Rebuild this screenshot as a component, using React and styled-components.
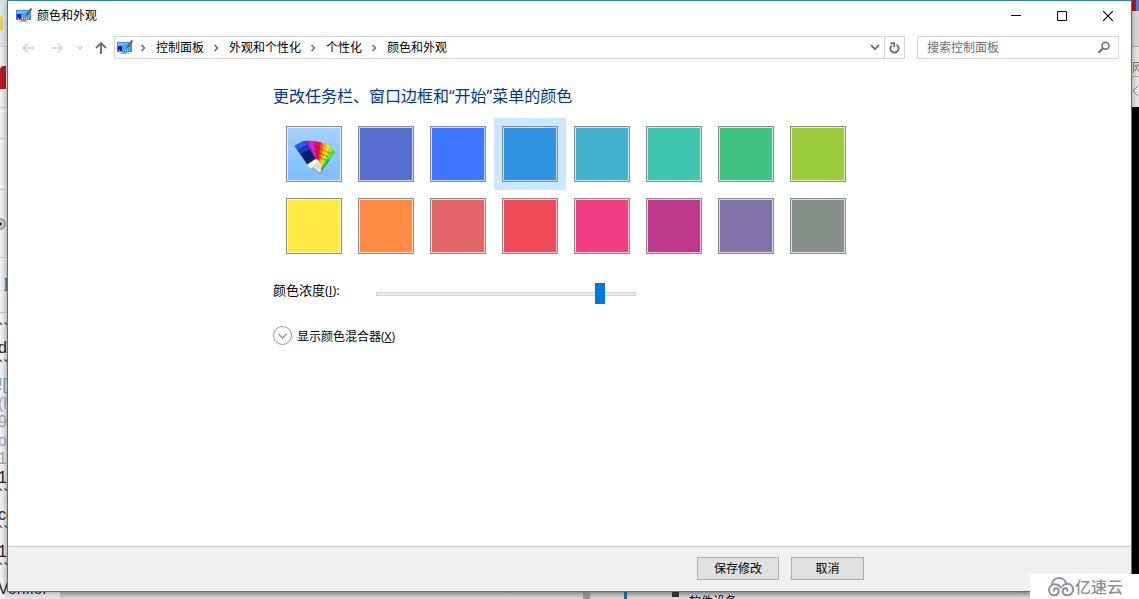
import { useState } from "react";
import styled, { createGlobalStyle } from "styled-components";

const GlobalStyle = createGlobalStyle`
  * {
    box-sizing: border-box;
  }
  body {
    margin: 0;
    overflow: hidden;
    font-family: "Open Sans", "Noto Sans CJK SC", sans-serif;
    font-size: 12px;
    color: #000;
  }
  button, input {
    font: inherit;
    color: inherit;
    margin: 0;
  }
`;

// Desktop and the windows that peek out from behind

const Desktop = styled.div`
  position: relative;
  display: flex;
  min-height: 100vh;
  padding: 0 7px 7px;
  background: #e3e3e3;
  overflow: hidden;
`;

const Backdrop = styled.div`
  position: absolute;
  inset: 0;
  display: flex;
  justify-content: space-between;
`;

const Editor = styled.div`
  display: flex;
  flex-direction: column;
  width: 60px;
  background: linear-gradient(90deg, #f1f2f5, #e3e3e5 8px);
`;

const EditorBand = styled.div`
  display: flex;
  align-items: center;
  flex: none;
  height: ${(props) => props.height}px;
  background: ${(props) => props.fill || "transparent"};
  border-bottom: 1px solid #c5c8cd;
`;

const Mark = styled.span`
  width: ${(props) => props.width}px;
  height: ${(props) => props.height}px;
  background: ${(props) => props.color};
  border-radius: ${(props) => props.radius || "0"};
`;

const RadioMark = styled.span`
  width: 12px;
  height: 12px;
  margin-left: -6px;
  border: 2px solid #a5a5a5;
  border-radius: 50%;
  background: #444;
  box-shadow: inset 0 0 0 2px #ddd;
`;

const SerifMark = styled.span`
  margin-left: 3px;
  font-family: "Liberation Serif", serif;
  font-size: 18px;
  color: #4b7494;
`;

const EditorLines = styled.div`
  flex: 1;
  display: grid;
  grid-auto-rows: 1fr;
  padding: 8px 0 1px;
  margin-left: -2px;
  font-family: "Liberation Sans", sans-serif;
  font-size: 16px;
  line-height: 18px;
`;

const EditorLine = styled.span`
  color: ${(props) => props.color || "#222"};
  white-space: nowrap;
`;

const RightPane = styled.div`
  display: flex;
  flex-direction: column;
  width: 7px;
  background: #e6e6e6;
`;

const PaneBand = styled.div`
  display: flex;
  align-items: flex-end;
  flex: ${(props) => (props.height ? "none" : 1)};
  height: ${(props) => props.height}px;
  background: ${(props) => props.fill};
  color: #777;
  border-bottom: ${(props) => (props.line ? "1px solid #aaa" : "none")};
  overflow: hidden;
`;

const Taskline = styled.div`
  position: absolute;
  left: 0;
  right: 0;
  bottom: 0;
  display: flex;
  height: 7px;
  padding-left: 60px;
  overflow: hidden;
`;

const TaskBlank = styled.span`
  width: 523px;
  background: linear-gradient(180deg, #aaa, #e0e0e0);
`;

const TaskScroll = styled.span`
  width: 7px;
  background: #969696;
`;

const TaskGap = styled.span`
  width: 34px;
  background: linear-gradient(180deg, #aaa, #dcdcdc);
`;

const TaskWindow = styled.span`
  flex: 1;
  display: flex;
  gap: 10px;
  padding-left: 45px;
  border-left: 3px solid #2a6a8f;
  background: linear-gradient(180deg, #aaa, #e0e0e0);
  font-size: 12px;
  line-height: 20px;
`;

// The settings window

const Window = styled.main`
  position: relative;
  flex: 1;
  display: flex;
  flex-direction: column;
  min-width: 0;
  background: #fff;
  border: 1px solid #2d7cad;
  box-shadow: 0 0 6px rgba(0, 0, 0, 0.35);
`;

const TitleBar = styled.header`
  display: flex;
  align-items: center;
  height: 29px;
  padding-left: 8px;
`;

const WindowTitle = styled.h1`
  flex: 1;
  margin: 0 0 0 4px;
  font-size: 12px;
  font-weight: 400;
  line-height: 16px;
`;

const CaptionButton = styled.button`
  display: flex;
  align-items: center;
  justify-content: center;
  width: 46px;
  height: 29px;
  padding: 0;
  border: 0;
  background: none;
  &:hover {
    background: ${(props) => (props.$danger ? "#e81123" : "#e5e5e5")};
  }
`;

const NavBar = styled.div`
  display: flex;
  align-items: center;
  padding: 6px 12px 0 5px;
`;

const NavButton = styled.button`
  display: flex;
  align-items: center;
  justify-content: center;
  width: ${(props) => props.$width}px;
  height: 23px;
  padding: 0;
  border: 0;
  background: none;
`;

const AddressBar = styled.nav`
  flex: 1;
  display: flex;
  align-items: center;
  height: 23px;
  padding-left: 2px;
  border: 1px solid #d5d5d5;
`;

const Crumbs = styled.ol`
  flex: 1;
  display: flex;
  margin: 0 0 0 -3px;
  padding: 0;
  list-style: none;
`;

const Crumb = styled.li`
  display: flex;
  align-items: center;
  line-height: 16px;
`;

const CrumbLink = styled.a`
  color: #000;
  text-decoration: none;
  white-space: nowrap;
`;

const CrumbArrow = styled.svg`
  width: 25px;
  height: 16px;
`;

const RefreshButton = styled(NavButton)`
  height: 21px;
  border-left: 1px solid #d5d5d5;
`;

const SearchBox = styled.label`
  display: flex;
  align-items: center;
  width: 202px;
  height: 23px;
  margin-left: 12px;
  padding: 0 7px 0 9px;
  border: 1px solid #d5d5d5;
`;

const SearchInput = styled.input`
  flex: 1;
  min-width: 0;
  height: 20px;
  padding: 0;
  border: 0;
  outline: 0;
  background: none;
  &::placeholder {
    color: #6d6d6d;
    opacity: 1;
  }
`;

const Content = styled.section`
  flex: 1;
  width: 593px;
  max-width: 100%;
  margin: 0 auto;
  padding-top: 25px;
`;

const Heading = styled.h2`
  margin: 0;
  font-size: 16px;
  font-weight: 400;
  line-height: 24px;
  color: #003399;
`;

const SwatchGrid = styled.div`
  display: grid;
  grid-template-columns: repeat(8, 72px);
  margin: 10px 0 0 5px;
`;

const SwatchCell = styled.button`
  display: flex;
  padding: 8px;
  border: 0;
  background: ${(props) => (props.$selected ? "#cce8ff" : "none")};
`;

const Swatch = styled.span`
  display: block;
  width: 56px;
  height: 56px;
  border: 1px solid #8a8d8d;
  box-shadow: inset 0 0 0 1px rgba(255, 255, 255, 0.7);
  background: ${(props) => props.color};
`;

const IntensityRow = styled.div`
  display: flex;
  margin-top: 21px;
`;

const IntensityLabel = styled.label`
  width: 103px;
  font-size: 13px;
  line-height: 14px;
`;

const Slider = styled.input`
  appearance: none;
  width: 260px;
  height: 21px;
  background: none;
  &::-webkit-slider-runnable-track {
    height: 4px;
    border: 1px solid #d6d6d6;
    background: #e7eaea;
  }
  &::-webkit-slider-thumb {
    appearance: none;
    width: 10px;
    height: 21px;
    margin-top: -10px;
    background: #0078d7;
  }
`;

const MixerButton = styled.button`
  display: flex;
  align-items: center;
  gap: 5px;
  height: 19px;
  margin-top: 22px;
  padding: 0;
  border: 0;
  background: none;
`;

const Footer = styled.footer`
  height: 45px;
  padding-top: 10px;
  border-top: 1px solid #cdcdcd;
  background: #f0f0f0;
`;

const FooterInner = styled.div`
  display: flex;
  justify-content: flex-end;
  gap: 12px;
  width: 593px;
  max-width: 100%;
  margin: 0 auto;
  padding-right: 2px;
`;

const PushButton = styled.button`
  width: ${(props) => props.$width}px;
  height: 23px;
  padding: 0;
  border: 1px solid #adadad;
  background: #e1e1e1;
  line-height: 16px;
`;

const Watermark = styled.div`
  position: absolute;
  right: 0;
  bottom: 0;
  display: flex;
  align-items: center;
  gap: 1px;
  width: 109px;
  height: 25px;
  padding-left: 18px;
  background: #fff;
  color: #8c929c;
  font-size: 16px;
  font-weight: 500;
  line-height: 24px;
`;

const colors = [
  ["自动", "linear-gradient(180deg, #a6d2fc, #7dbdfb)"],
  ["蓝紫色", "#566dcd"],
  ["蓝色", "#4075ff"],
  ["天蓝色", "#3192e1"],
  ["青蓝色", "#42b0ce"],
  ["青绿色", "#40c6af"],
  ["绿色", "#40c381"],
  ["黄绿色", "#9ccc3d"],
  ["黄色", "#fee842"],
  ["橙色", "#fc8b46"],
  ["浅红色", "#e3666b"],
  ["红色", "#ef4b5a"],
  ["粉色", "#f13f84"],
  ["紫红色", "#bc398c"],
  ["淡紫色", "#7f73a7"],
  ["灰色", "#869289"],
];

const crumbs = ["控制面板", "外观和个性化", "个性化", "颜色和外观"];

const editorLines = [
  ["```"],
  ["d"],
  ["```"],
  ["![", "#7f9a94"],
  ["(h", "#a3a7ad"],
  ["9", "#a3a7ad"],
  ["o", "#a3a7ad"],
  ["1", "#a3a7ad"],
  ["1"],
  ["```"],
  ["cc"],
  ["```"],
  ["1"],
  ["```"],
  ["Verifier"],
];

function DisplayIcon() {
  return (
    <svg width="17" height="16" viewBox="0 0 17 16" aria-hidden="true">
      <path d="M0 2h15v10H0z" fill="#4f86c0" />
      <path d="M1 3h13v8H1z" fill="#38a9f5" />
      <path d="M1 6c4-1 7-1 13-3H1z" fill="#6cc6fa" />
      <path d="M1 6h4v4H1z" fill="#3010d8" />
      <path d="M1 9h4v2H1z" fill="#2a20c8" />
      <path d="M5 10h9v1H5z" fill="#2f6fdc" />
      <path d="M2 10.500h1M6 10.500h1M8 10.500h1M10 10.500h1M12 10.500h1" stroke="#fff" />
      <path d="M5 12h5v1H5z" fill="#8b9aa5" />
      <path d="M3 13h9v1H3z" fill="#9fb4c4" />
      <path d="M15.500 .5L11 6" stroke="#4f6870" strokeWidth="2" />
      <path d="M11.500 5L9 8.500l3.200-2z" fill="#384c55" />
    </svg>
  );
}

function FanIcon() {
  return (
    <svg width="54" height="54" viewBox="51 51 162 162" aria-hidden="true">
      <path d="M188 120l7 8-39 54-8-12z" fill="#19b43c" />
      <path d="M190 124l4 6-16 20-5-5z" fill="#42ee5d" />
      <path d="M180 109l10 9-35 58-10-12z" fill="#9be31d" />
      <path d="M170 103l11 6-28 62-8-6z" fill="#f2e21c" />
      <path d="M161 99l10 6-20 62-8-6z" fill="#ffb319" />
      <path d="M152 97l10 4-14 62-9-4z" fill="#f8641c" />
      <path d="M140 94l13 3-8 62-10-6z" fill="#e8182d" />
      <path d="M128 92l13 3 1 60-10-4z" fill="#dc1173" />
      <path d="M115 91l14 3 10 58-10 0z" fill="#e420c8" />
      <path d="M101 93l14-1 22 56-12 6z" fill="#7622c6" />
      <path d="M74 107l27-14 37 55-26 16z" fill="#0a1f74" />
      <path d="M74 107l27-14 9 13-27 15z" fill="#285ff2" />
      <path d="M83 121l27-15 8 12-27 15z" fill="#1440bd" />
      <path
        d="M83 121l27-15M91 133l27-15M98 143l27-15M105 153l27-15M133 108l48 22M135 123l39 18M138 137l30 14"
        stroke="#101c59"
        strokeWidth="2"
        opacity=".6"
      />
      <path d="M111 164l25-17 10 4-3 14-10 3-5 6-9-1z" fill="#fff" />
      <path d="M133 164l13-13 10 18-3 17-5 4-8-5-13-13z" fill="#deded9" />
      <path d="M157 168l-2 17-6 4-9-5-12-12" fill="none" stroke="#4c5a66" strokeWidth="2" />
      <circle cx="148" cy="182" r="3" fill="#fff" />
    </svg>
  );
}

function CloudLogo() {
  return (
    <svg
      width="26"
      height="20"
      viewBox="0 0 78 60"
      fill="none"
      stroke="#8c929c"
      strokeWidth="6"
      strokeLinecap="round"
      aria-hidden="true"
    >
      <path d="M12 24C12-1 47-4 54 18" />
      <path d="M18 41c-1-4 2-7 6-7 5 0 8 4 8 9 0 7-5 12-13 12-9 0-16-7-16-16 0-10 8-17 18-17 8 0 13 3 17 9" />
      <path d="M58 41c1-4-2-7-6-7-5 0-8 4-8 9 0 7 6 12 14 12 9 0 17-7 17-17 0-11-8-18-17-18-6 0-11 2-15 7" />
    </svg>
  );
}

function Background() {
  return (
    <Backdrop aria-hidden="true">
      <Editor>
        <EditorBand height={47} fill="#dfe3ec">
          <Mark width={3} height={15} color="#e6cf6d" radius="0 3px 0 0" />
        </EditorBand>
        <EditorBand height={61}>
          <Mark width={6} height={23} color="#b01c22" radius="4px 0 0 0" />
        </EditorBand>
        <EditorBand height={31} />
        <EditorBand height={51} />
        <EditorBand height={68}>
          <RadioMark />
        </EditorBand>
        <EditorBand height={55}>
          <SerifMark>I</SerifMark>
        </EditorBand>
        <EditorLines>
          {editorLines.map(([text, color], i) => (
            <EditorLine key={i} color={color}>
              {text}
            </EditorLine>
          ))}
        </EditorLines>
      </Editor>
      <RightPane>
        <PaneBand height={11} fill="linear-gradient(90deg, #c3101c 4px, #4a7fd0 4px)" />
        <PaneBand height={36} fill="#d9d9d9" line />
        <PaneBand height={30} fill="#e8e6e2" line>
          网
        </PaneBand>
        <PaneBand height={30} fill="#e6e6e6">
          <svg width="7" height="24" viewBox="0 0 7 24" fill="none" stroke="#888">
            <path d="M6 3L1 8l5 5" />
          </svg>
        </PaneBand>
        <PaneBand fill="#000" />
      </RightPane>
      <Taskline>
        <TaskBlank />
        <TaskScroll />
        <TaskGap />
        <TaskWindow>
          <Mark width={7} height={5} color="#333" />
          软件设备
        </TaskWindow>
      </Taskline>
    </Backdrop>
  );
}

function Caption() {
  return (
    <TitleBar>
      <DisplayIcon />
      <WindowTitle>颜色和外观</WindowTitle>
      <CaptionButton aria-label="最小化">
        <svg width="10" height="10" viewBox="0 0 10 10">
          <path d="M0 4.500h10" stroke="#000" />
        </svg>
      </CaptionButton>
      <CaptionButton aria-label="最大化">
        <svg width="10" height="10" viewBox="0 0 10 10">
          <path d="M.5.5h9v9h-9z" fill="none" stroke="#000" />
        </svg>
      </CaptionButton>
      <CaptionButton aria-label="关闭" $danger>
        <svg width="10" height="10" viewBox="0 0 10 10">
          <path d="M0 0l10 10M10 0L0 10" stroke="#000" strokeWidth="1.200" />
        </svg>
      </CaptionButton>
    </TitleBar>
  );
}

function Navigation() {
  return (
    <NavBar>
      <NavButton $width={29} aria-label="后退">
        <svg width="14" height="12" viewBox="0 0 14 12" fill="none" stroke="#d0d0d0" strokeWidth="1.500">
          <path d="M13 6H2M6.500 1.500L2 6l4.500 4.500" />
        </svg>
      </NavButton>
      <NavButton $width={29} aria-label="前进">
        <svg width="14" height="12" viewBox="0 0 14 12" fill="none" stroke="#d0d0d0" strokeWidth="1.500">
          <path d="M1 6h11M7.500 1.500L12 6l-4.500 4.500" />
        </svg>
      </NavButton>
      <NavButton $width={17} aria-label="最近浏览的位置">
        <svg width="8" height="6" viewBox="0 0 8 6" fill="none" stroke="#d0d0d0" strokeWidth="1.500">
          <path d="M1.500 1.500L4 4l2.500-2.500" />
        </svg>
      </NavButton>
      <NavButton $width={26} aria-label="上移">
        <svg width="12" height="14" viewBox="0 0 12 14" fill="none" stroke="#6c6c6c" strokeWidth="1.900">
          <path d="M6 13V2M1 7l5-5 5 5" />
        </svg>
      </NavButton>
      <AddressBar aria-label="地址">
        <DisplayIcon />
        <Crumbs>
          {crumbs.map((name) => (
            <Crumb key={name}>
              <CrumbArrow viewBox="0 0 25 16" fill="none" stroke="#6c6c6c" strokeWidth="1.500">
                <path d="M10.500 5L13.500 8l-3 3" />
              </CrumbArrow>
              <CrumbLink href="#">{name}</CrumbLink>
            </Crumb>
          ))}
        </Crumbs>
        <NavButton $width={18} aria-label="以前的位置">
          <svg width="10" height="7" viewBox="0 0 10 7" fill="none" stroke="#6c6c6c" strokeWidth="1.900">
            <path d="M1 1.200l4 4 4-4" />
          </svg>
        </NavButton>
        <RefreshButton $width={20} aria-label="刷新">
          <svg width="11" height="12" viewBox="0 0 11 12" fill="none" stroke="#6c6c6c" strokeWidth="1.800">
            <path d="M7.600 2.700a4.200 4.200 0 1 1-5 .6" />
            <path d="M1.300 1.200h3.900v3.800" />
          </svg>
        </RefreshButton>
      </AddressBar>
      <SearchBox>
        <SearchInput type="text" aria-label="搜索控制面板" placeholder="搜索控制面板" />
        <svg width="14" height="13" viewBox="0 0 14 13" fill="none" stroke="#6c6c6c">
          <circle cx="8.500" cy="4.800" r="3.500" strokeWidth="1.500" />
          <path d="M6 7.300L1.500 11.800" strokeWidth="2" />
        </svg>
      </SearchBox>
    </NavBar>
  );
}

export default function App() {
  const [selected, setSelected] = useState(3);
  const [intensity, setIntensity] = useState(224);

  return (
    <>
      <GlobalStyle />
      <Desktop>
        <Background />
        <Window>
          <Caption />
          <Navigation />
          <Content>
            <Heading>更改任务栏、窗口边框和“开始”菜单的颜色</Heading>
            <SwatchGrid>
              {colors.map(([name, color], i) => (
                <SwatchCell
                  key={name}
                  aria-label={name}
                  aria-pressed={selected === i}
                  $selected={selected === i}
                  onClick={() => setSelected(i)}
                >
                  <Swatch color={color}>{i === 0 && <FanIcon />}</Swatch>
                </SwatchCell>
              ))}
            </SwatchGrid>
            <IntensityRow>
              <IntensityLabel htmlFor="intensity">
                颜色浓度(<u>I</u>):
              </IntensityLabel>
              <Slider
                id="intensity"
                type="range"
                min="0"
                max="255"
                value={intensity}
                onChange={(e) => setIntensity(Number(e.target.value))}
              />
            </IntensityRow>
            <MixerButton>
              <svg width="19" height="19" viewBox="0 0 19 19" fill="none" stroke="#9a9a9a">
                <circle cx="9.500" cy="9.500" r="9" />
                <path d="M5.500 8l4 4 4-4" strokeWidth="1.500" />
              </svg>
              <span>
                显示颜色混合器(<u>X</u>)
              </span>
            </MixerButton>
          </Content>
          <Footer>
            <FooterInner>
              <PushButton $width={82}>保存修改</PushButton>
              <PushButton $width={73}>取消</PushButton>
            </FooterInner>
          </Footer>
        </Window>
        <Watermark>
          <CloudLogo />
          <span>亿速云</span>
        </Watermark>
      </Desktop>
    </>
  );
}
